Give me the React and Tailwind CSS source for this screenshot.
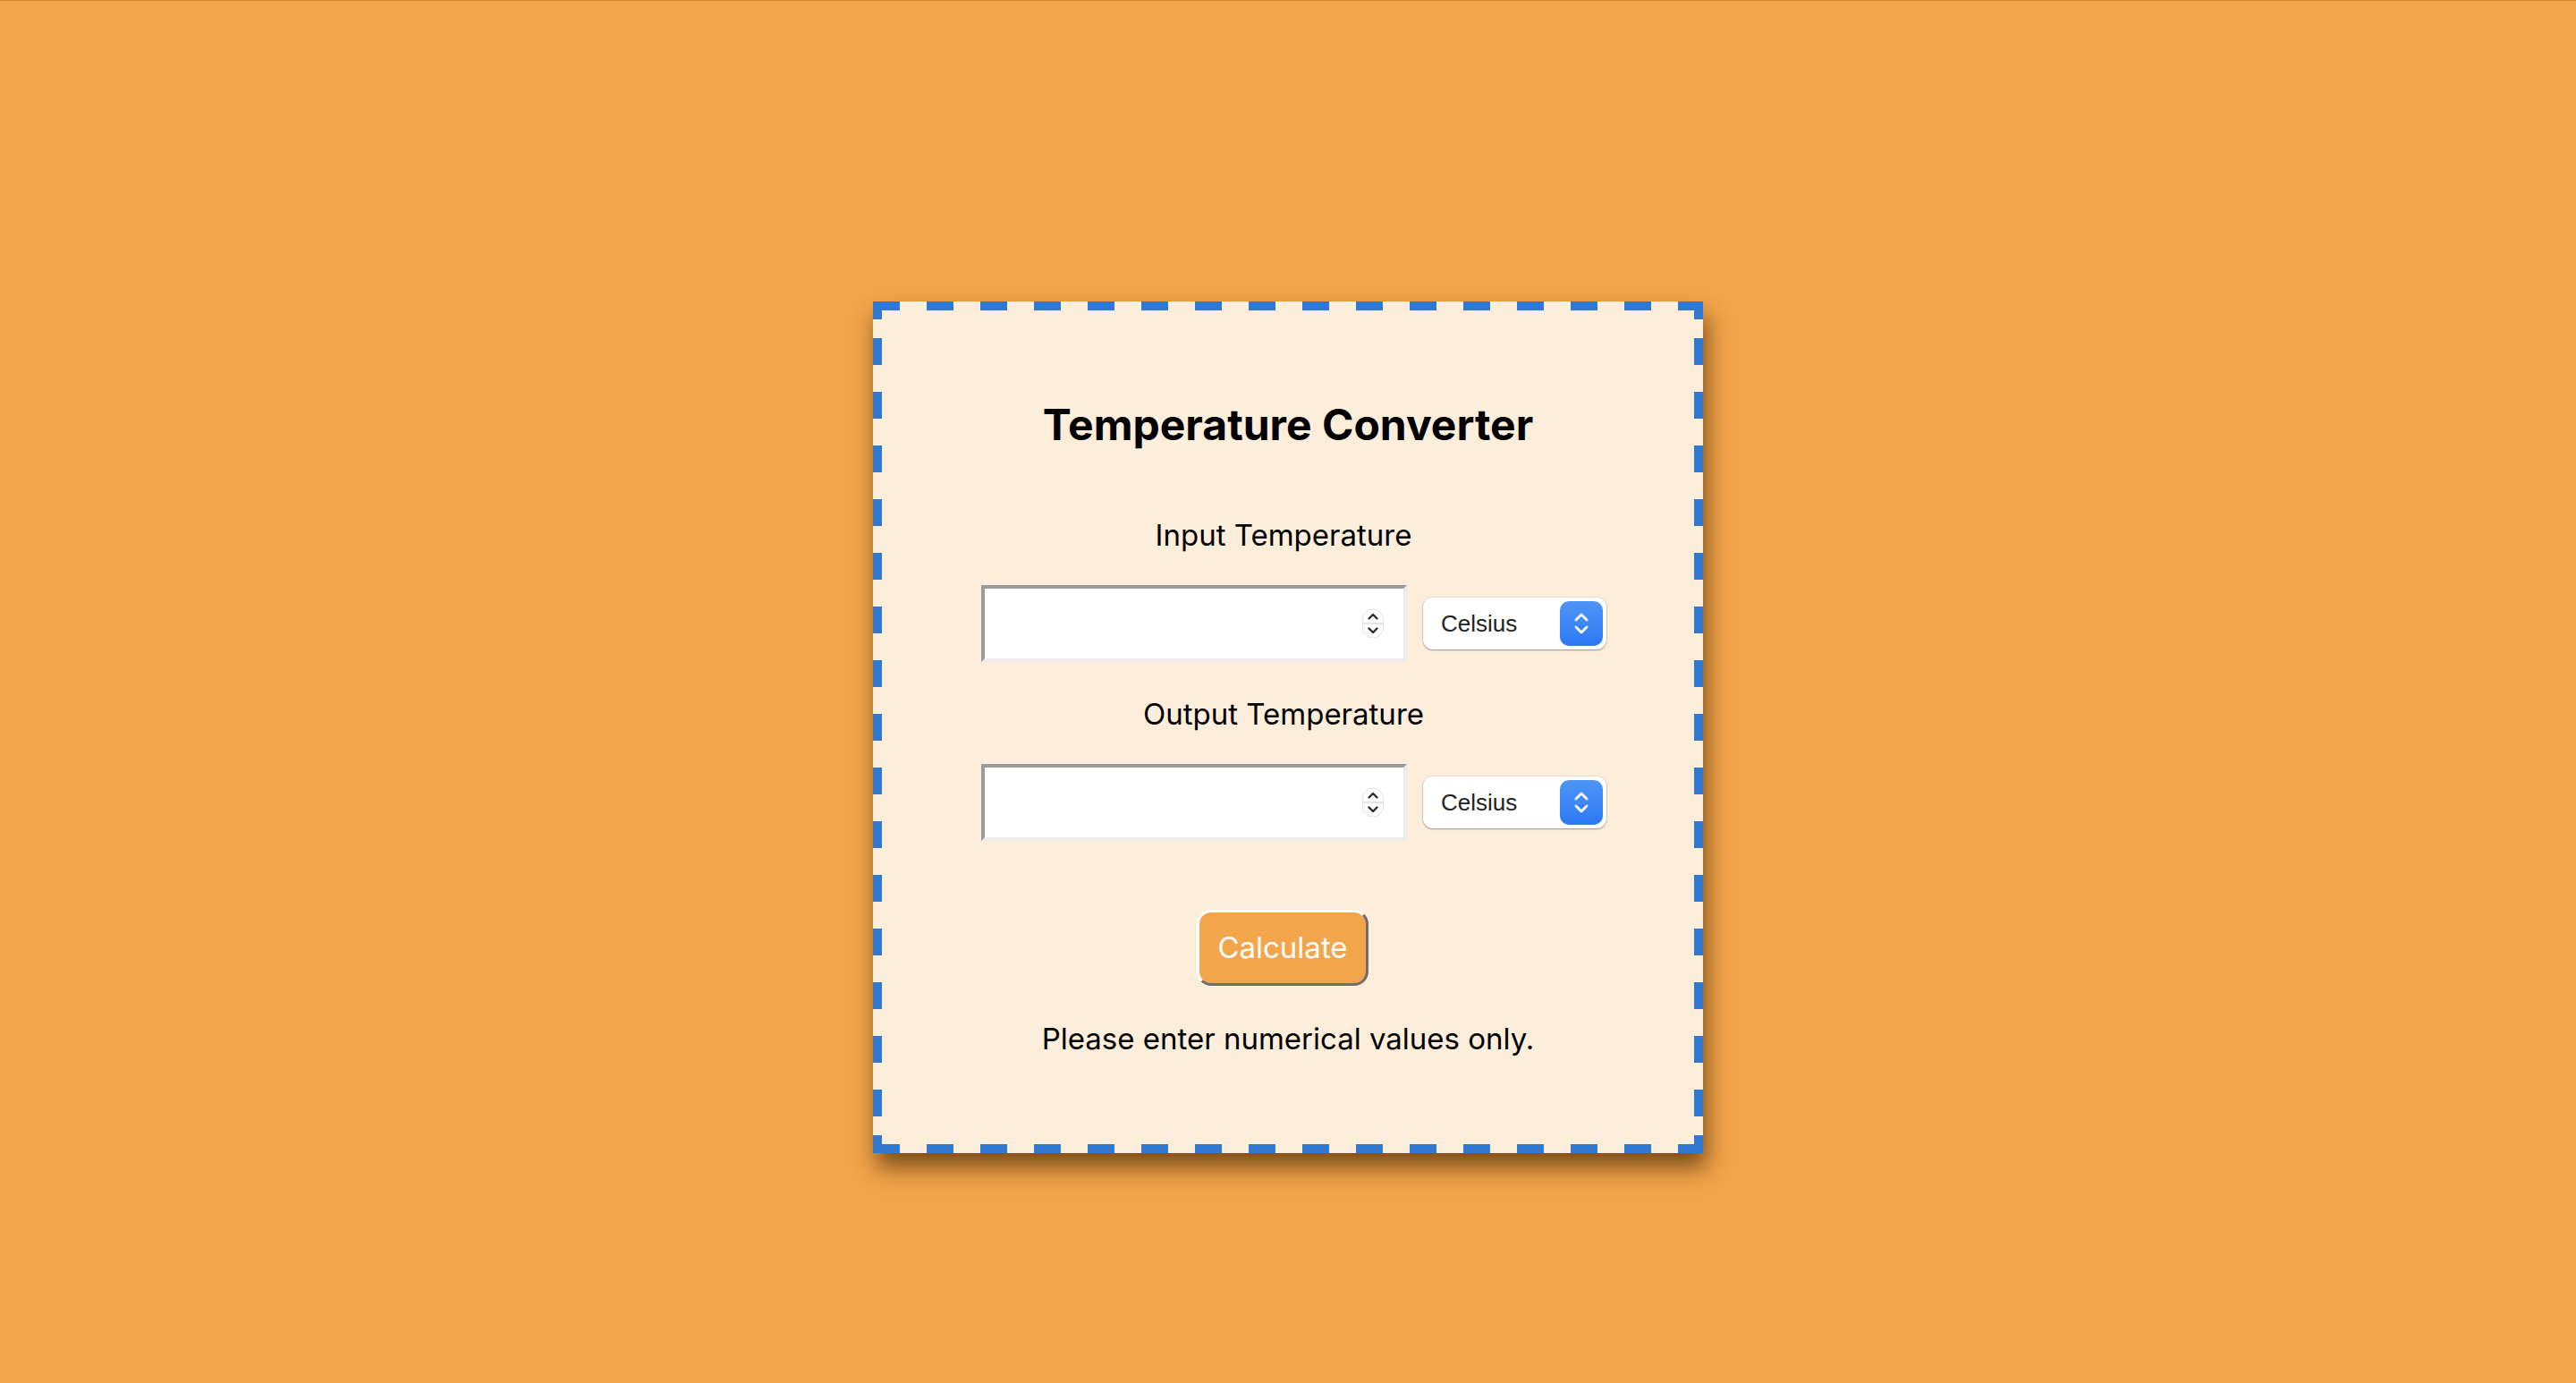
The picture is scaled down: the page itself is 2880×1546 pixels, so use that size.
import React, { useState } from 'react';

const UNITS = ['Celsius', 'Fahrenheit', 'Kelvin'];

const Spinner = () => (
  <svg className="absolute right-[26px] top-1/2 -translate-y-1/2" width="24" height="33" viewBox="0 0 24 33">
    <rect x="0.5" y="0.5" width="23" height="32" rx="11.5" fill="#ffffff" stroke="#e2e2e2" />
    <line x1="1" y1="16.5" x2="23" y2="16.5" stroke="#dedede" strokeWidth="1.5" />
    <path d="M7.5 11 L12 6.5 L16.5 11" fill="none" stroke="#2a2a2a" strokeWidth="2.4" strokeLinecap="round" strokeLinejoin="round" />
    <path d="M7.5 22 L12 26.5 L16.5 22" fill="none" stroke="#2a2a2a" strokeWidth="2.4" strokeLinecap="round" strokeLinejoin="round" />
  </svg>
);

const UnitSelect = ({ value, onChange }) => (
  <div className="relative w-[205px] h-[58px] rounded-[11px] bg-white shadow-[0_1px_2px_rgba(0,0,0,0.35),0_0_0_1px_rgba(0,0,0,0.05)]">
    <select
      value={value}
      onChange={(e) => onChange(e.target.value)}
      className="appearance-none w-full h-full bg-transparent pl-[20px] pr-[60px] text-[26px] text-[#222] outline-none font-['Liberation_Sans',Arial,sans-serif]"
    >
      {UNITS.map((u) => (
        <option key={u} value={u}>{u}</option>
      ))}
    </select>
    {/* blue arrow box */}
    <div className="pointer-events-none absolute right-[4px] top-[4px] w-[48px] h-[50px] rounded-[10px] bg-gradient-to-b from-[#4f95f6] to-[#2c78f4] flex items-center justify-center">
      <svg width="20" height="28" viewBox="0 0 20 28">
        <path d="M4 10 L10 4 L16 10" fill="none" stroke="#ffffff" strokeWidth="2.8" strokeLinecap="round" strokeLinejoin="round" />
        <path d="M4 18 L10 24 L16 18" fill="none" stroke="#ffffff" strokeWidth="2.8" strokeLinecap="round" strokeLinejoin="round" />
      </svg>
    </div>
  </div>
);

const TempRow = ({ label, value, setValue, unit, setUnit, className }) => (
  <div className={`flex flex-col items-center ${className}`}>
    <label className="block mr-[10px] text-[33px] leading-[38px] text-black">{label}</label>
    <div className="mt-[37px] ml-[13px] flex items-center gap-[18px]">
      <div className="relative">
        <input
          type="text"
          inputMode="decimal"
          value={value}
          onChange={(e) => setValue(e.target.value)}
          className="block w-[476px] h-[86px] bg-white border-4 border-t-[#9c9c9c] border-l-[#9c9c9c] border-b-[#ececec] border-r-[#ececec] px-4 text-[30px] outline-none"
        />
        <Spinner />
      </div>
      <UnitSelect value={unit} onChange={setUnit} />
    </div>
  </div>
);

export default function App() {
  const [input, setInput] = useState('');
  const [output, setOutput] = useState('');
  const [inUnit, setInUnit] = useState('Celsius');
  const [outUnit, setOutUnit] = useState('Celsius');

  const calculate = () => {
    const v = parseFloat(input);
    if (isNaN(v)) return;
    let c = v;
    if (inUnit === 'Fahrenheit') c = (v - 32) * 5 / 9;
    if (inUnit === 'Kelvin') c = v - 273.15;
    let r = c;
    if (outUnit === 'Fahrenheit') r = c * 9 / 5 + 32;
    if (outUnit === 'Kelvin') r = c + 273.15;
    setOutput(String(Math.round(r * 100) / 100));
  };

  return (
    <div className="min-h-screen bg-[#f2a54a] border-t border-[#d98a2e] flex justify-center pt-[336px] font-['Inter',sans-serif]">
      {/* card: dashed frame drawn with background layers (30px dashes, 20px corners) */}
      <div className="w-[928px] h-[952px] p-[10px] shadow-[4px_16px_24px_rgba(60,30,0,0.65)] flex flex-col items-center [background:linear-gradient(#3178d1,#3178d1)_left_top/10px_20px_no-repeat,linear-gradient(#3178d1,#3178d1)_left_bottom/10px_20px_no-repeat,linear-gradient(#3178d1,#3178d1)_right_top/10px_20px_no-repeat,linear-gradient(#3178d1,#3178d1)_right_bottom/10px_20px_no-repeat,repeating-linear-gradient(to_right,#3178d1_0_30px,transparent_30px_60px)_left_top/100%_10px_no-repeat,repeating-linear-gradient(to_right,#3178d1_0_30px,transparent_30px_60px)_left_bottom/100%_10px_no-repeat,repeating-linear-gradient(to_bottom,#3178d1_0_11px,transparent_11px_41px,#3178d1_41px_60px)_left_top/10px_100%_no-repeat,repeating-linear-gradient(to_bottom,#3178d1_0_11px,transparent_11px_41px,#3178d1_41px_60px)_right_top/10px_100%_no-repeat,#fdeedb]">
        <h1 className="mt-[100px] text-[48px] leading-[56px] font-bold text-black">Temperature Converter</h1>

        <TempRow
          className="mt-[76px]"
          label="Input Temperature"
          value={input}
          setValue={setInput}
          unit={inUnit}
          setUnit={setInUnit}
        />
        <TempRow
          className="mt-[39px]"
          label="Output Temperature"
          value={output}
          setValue={setOutput}
          unit={outUnit}
          setUnit={setOutUnit}
        />

        <button
          onClick={calculate}
          className="mt-[77px] mr-[12px] w-[192px] h-[85px] rounded-[16px] bg-[#f2a54a] text-white text-[33px] border-[3px] border-t-white border-l-white border-b-[#6f6f6f] border-r-[#6f6f6f]"
        >
          Calculate
        </button>

        <p className="mt-[40px] text-[33px] leading-[38px] text-black">Please enter numerical values only.</p>
      </div>
    </div>
  );
}
